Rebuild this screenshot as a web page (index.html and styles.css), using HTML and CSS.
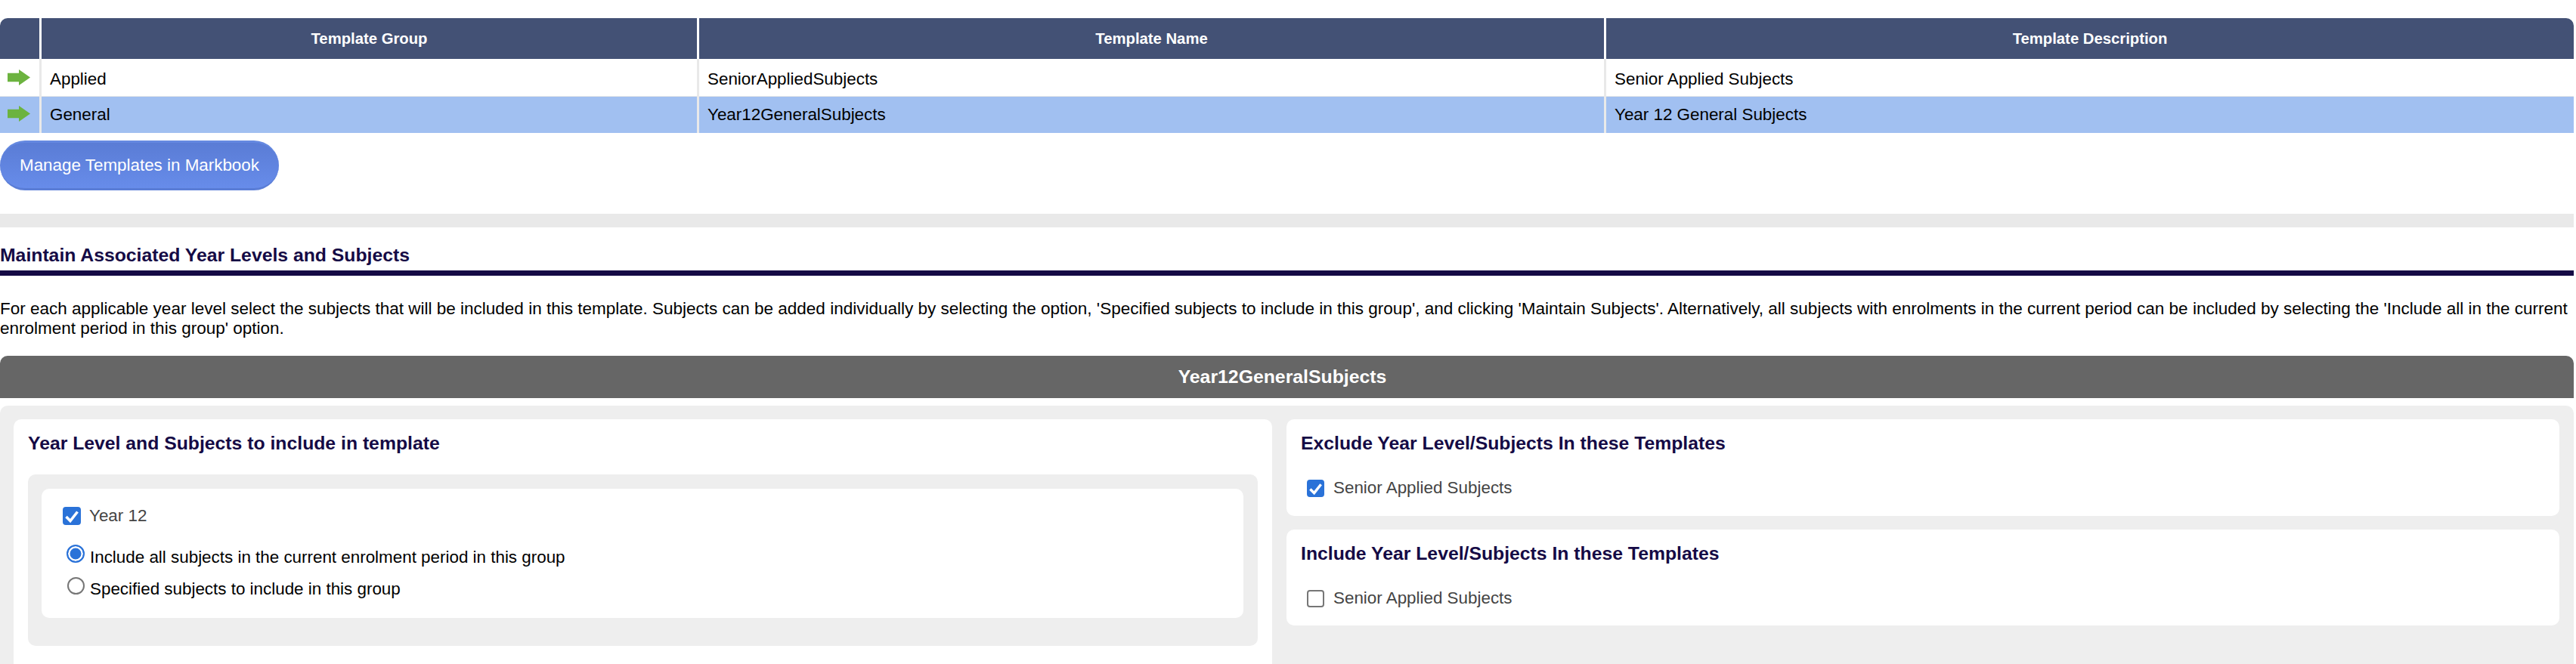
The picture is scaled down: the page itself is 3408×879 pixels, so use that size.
FILE: index.html
```html
<!DOCTYPE html>
<html lang="en">
<head>
<meta charset="utf-8">
<title>Maintain Templates</title>
<link rel="stylesheet" href="styles.css">
</head>
<body>
<table class="grid">
<colgroup><col class="c0"><col class="c1"><col class="c2"><col class="c3"></colgroup>
<thead>
<tr><th></th><th>Template Group</th><th>Template Name</th><th>Template Description</th></tr>
</thead>
<tbody>
<tr>
<td class="arrow-cell"><svg class="arrow" viewBox="0 0 30 20" preserveAspectRatio="none"><path d="M0 4.5H15V0L30 10L15 20V15.5H0Z"/></svg></td>
<td>Applied</td><td>SeniorAppliedSubjects</td><td>Senior Applied Subjects</td>
</tr>
<tr class="selected">
<td class="arrow-cell"><svg class="arrow" viewBox="0 0 30 20" preserveAspectRatio="none"><path d="M0 4.5H15V0L30 10L15 20V15.5H0Z"/></svg></td>
<td>General</td><td>Year12GeneralSubjects</td><td>Year 12 General Subjects</td>
</tr>
</tbody>
</table>
<div class="btn-row"><button class="pill" type="button">Manage Templates in Markbook</button></div>
<div class="band"></div>
<h2 class="section-title">Maintain Associated Year Levels and Subjects</h2>
<p class="intro">For each applicable year level select the subjects that will be included in this template. Subjects can be added individually by selecting the option, 'Specified subjects to include in this group', and clicking 'Maintain Subjects'. Alternatively, all subjects with enrolments in the current period can be included by selecting the 'Include all in the current enrolment period in this group' option.</p>
<div class="bar">Year12GeneralSubjects</div>
<div class="panel">
  <section class="card left">
    <h3>Year Level and Subjects to include in template</h3>
    <div class="inner">
      <div class="inner-card">
        <label class="year"><input type="checkbox" checked>Year 12</label>
        <label class="opt"><input type="radio" name="m" checked>Include all subjects in the current enrolment period in this group</label>
        <label class="opt"><input type="radio" name="m">Specified subjects to include in this group</label>
      </div>
    </div>
  </section>
  <div class="right">
    <section class="card small">
      <h3>Exclude Year Level/Subjects In these Templates</h3>
      <label class="tpl"><input type="checkbox" checked>Senior Applied Subjects</label>
    </section>
    <section class="card small">
      <h3>Include Year Level/Subjects In these Templates</h3>
      <label class="tpl"><input type="checkbox">Senior Applied Subjects</label>
    </section>
  </div>
</div>
</body>
</html>
```
FILE: styles.css
```css
* { box-sizing: border-box; }
html, body { height: 100%; }
body { margin: 0; padding: 24px 3px 0 0; background: #fff; font-family: "Liberation Sans", Arial, sans-serif; font-size: 22.4px; color: #000; overflow: hidden; display: flex; flex-direction: column; }
.grid { width: 3405px; border-collapse: separate; border-spacing: 0; table-layout: fixed; flex: none; }
.c0 { width: 55px; }
.c1 { width: 870px; }
.c2 { width: 1200px; }
.grid th { height: 54px; background: #435175; color: #fff; font-size: 20.3px; font-weight: bold; text-align: center; padding: 0; border-right: 3px solid #fff; }
.grid th:first-child { border-top-left-radius: 10px; }
.grid th:last-child { border-top-right-radius: 10px; border-right: 0; }
.grid td { height: 50px; padding: 4px 0 0 11px; font-size: 22.4px; border-right: 3px solid #e9e9e9; border-bottom: 1px solid #e9e9e9; }
.grid td:last-child { border-right: 0; }
.grid .selected td { height: 48px; padding-top: 0; background: #a1c0f1; border-bottom: 0; }
.grid td.arrow-cell { padding: 0 0 1px 10px; }
.grid .selected td.arrow-cell { padding: 0 0 4px 10px; }
.arrow { display: block; width: 30px; height: 21px; fill: #6cb33f; filter: blur(.5px); }
.btn-row { height: 107px; padding-top: 10px; flex: none; }
.pill { display: block; width: 369px; height: 66px; padding: 0; border: 0; border-top: 3px solid #6488e0; border-bottom: 3px solid #5a7dd6; border-radius: 33px; background: linear-gradient(#5a7cd5, #678cea); color: #fff; font: 22.4px/1 "Liberation Sans", Arial, sans-serif; }
.band { height: 18px; background: #e9e9e9; flex: none; }
.section-title { margin: 0; height: 64px; padding-top: 23px; border-bottom: 7px solid #150a45; color: #150a45; font-size: 24.75px; line-height: 28px; font-weight: bold; flex: none; }
.intro { margin: 0; padding-top: 31px; height: 106px; font-size: 22.5px; line-height: 26px; flex: none; }
.bar { height: 56px; line-height: 56px; padding-right: 12px; background: #666; color: #fff; font-size: 24.8px; font-weight: bold; text-align: center; border-radius: 10px 10px 0 0; flex: none; }
.panel { flex: 1; margin-top: 10px; padding: 18px 19px 0 18px; background: #eee; border-radius: 10px 10px 0 0; display: flex; gap: 19px; min-height: 0; }
.card { background: #fff; border-radius: 10px; padding: 18px 19px 0; }
.card h3 { margin: 0; color: #150a45; font-size: 24.75px; line-height: 28px; font-weight: bold; }
.left { width: 1665px; flex: none; border-radius: 10px 10px 0 0; }
.inner { margin-top: 27px; height: 227px; background: #eee; border-radius: 10px; padding: 19px 19px 0 18px; }
.inner-card { height: 171px; background: #fff; border-radius: 10px; padding: 24px 28px 0; }
.right { flex: 1; display: flex; flex-direction: column; gap: 18px; }
.small { height: 128px; }
.small + .small { height: 127px; }
label { display: flex; align-items: center; }
input { margin: 0; flex: none; appearance: none; background: #fff; border: 2px solid #767676; }
input[type="checkbox"] { border-radius: 4px; }
input[type="checkbox"]:checked { border-color: #2a72d8; background: #2a72d8 url("data:image/svg+xml,%3Csvg xmlns='http://www.w3.org/2000/svg' viewBox='0 0 20 20'%3E%3Cpath d='M2.5 11L8 16.5L17.5 4.5' fill='none' stroke='%23fff' stroke-width='3.6'/%3E%3C/svg%3E") center / 100% 100% no-repeat; }
input[type="radio"] { border-radius: 50%; }
input[type="radio"]:checked { border-color: #2a72d8; background: #2a72d8; box-shadow: inset 0 0 0 2.5px #fff; }
.year { height: 24px; gap: 11px; color: #444; }
.year input { width: 24px; height: 24px; }
.opt { height: 24px; margin-top: 31px; padding-left: 5px; gap: 7px; }
.opt + .opt { margin-top: 18px; }
.opt input { width: 24px; height: 24px; position: relative; top: -5px; }
.opt input:not(:checked) { width: 23px; height: 23px; margin: 0 .5px; }
.tpl { margin: 33px 0 0 8px; height: 24px; gap: 12px; color: #444; }
.tpl input { width: 23px; height: 23px; }
```
